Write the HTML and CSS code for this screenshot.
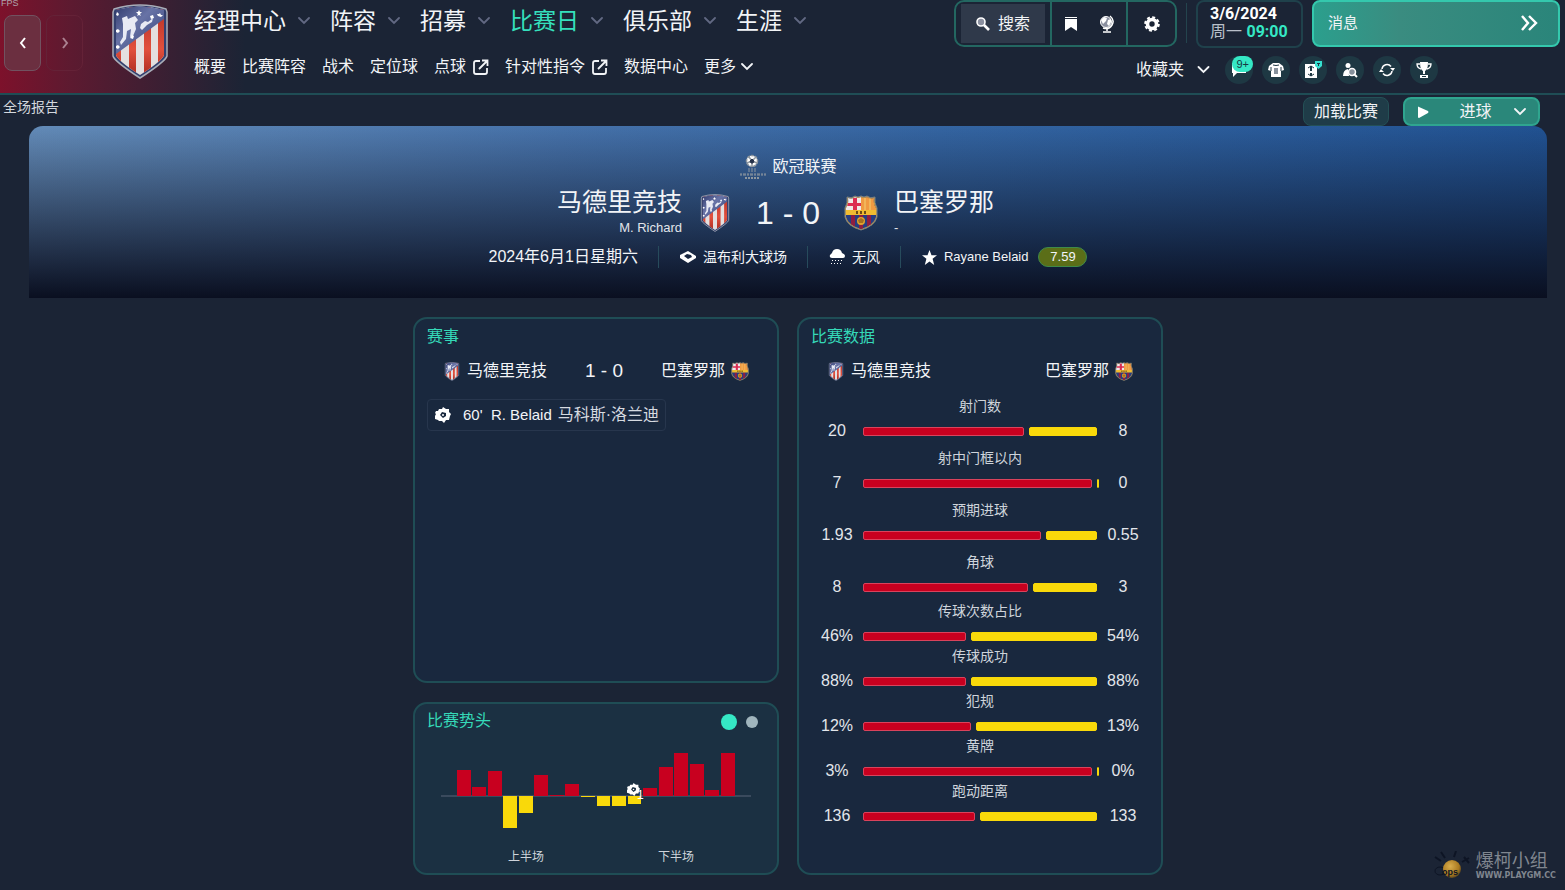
FILE: index.html
```html
<!DOCTYPE html>
<html lang="zh-CN">
<head>
    <meta charset="UTF-8">
    <meta name="viewport" content="width=device-width, initial-scale=1.0">
    <title>全场报告</title>
    <link rel="stylesheet" href="styles.css">
</head>
<body>
    <!-- shared symbols -->
    <svg class="sprite" aria-hidden="true">
        <defs>
            <linearGradient id="navy" x1="0" y1="0" x2="1" y2="1">
                <stop offset="0" stop-color="#2c3668"/>
                <stop offset="0.4" stop-color="#6873a6"/>
                <stop offset="1" stop-color="#28356f"/>
            </linearGradient>
            <linearGradient id="red" x1="0" y1="0" x2="0" y2="1">
                <stop offset="0" stop-color="#b22f24"/>
                <stop offset="0.6" stop-color="#e2503d"/>
                <stop offset="1" stop-color="#a5271d"/>
            </linearGradient>
            <radialGradient id="gold" cx="0.4" cy="0.35" r="0.7">
                <stop offset="0" stop-color="#d9ad4c"/>
                <stop offset="0.7" stop-color="#a97920"/>
                <stop offset="1" stop-color="#4a3a20"/>
            </radialGradient>
            <clipPath id="atmClip"><path d="M4 6Q28 -1 52 6V51Q50 57 28 71Q6 57 4 51Z"/></clipPath>
            <clipPath id="barClip"><path d="M4 3Q8 5 11 2Q14 4 17 2Q20 4 23 2Q26 5 30 3Q29 9 32 13V22Q30 30 17 34Q4 30 2 22V13Q5 9 4 3Z"/></clipPath>
        </defs>
        <symbol id="atletico" viewBox="0 0 56 75">
            <path d="M2 5Q28 -3 54 5L55 8V52Q54 57 28 74Q2 57 1 52V8Z" fill="#33406f" stroke="#a9adb8" stroke-width="1.5"/>
            <g clip-path="url(#atmClip)">
                <rect width="56" height="75" fill="#e4dfdf"/>
                <path d="M2 0h7v75H2zM17 0h7v75h-7zM32 0h7v75h-7zM46 0h7v75h-7z" fill="url(#red)"/>
                <path d="M0 0H56V12L0 53Z" fill="url(#navy)"/>
            </g>
            <path d="M10 14l5-2 1 3 7-3 3 4-3 3 1 6-3 7-3 1 1-8-4 2-1 8-5 6-1-3 3-5V20zM29 20l4-3 3 1 5-4-1 4-5 3-5 5-2-2z" fill="#e8eaf4"/>
            <path d="M27 6l1 2h2l-2 2 1 2-2-1-2 1 1-2-2-2h2zM48 9l1 2h2l-2 2-3-1-1-2h2zM5 8l2 2-1 2-2-1zM38 12l3-1 1 3-3 1zM4 26l2-1 2 2-2 2-2-1zM4 42l2-1 2 2-2 2-2-1zM20 31l2 1-1 3-3-1z" fill="#fff"/>
        </symbol>
        <symbol id="barcelona" viewBox="0 0 34 36">
            <path d="M3 2Q8 4 11 1Q14 3 17 1Q20 3 23 1Q26 4 31 2Q30 8 33 13V22Q31 31 17 35Q3 31 1 22V13Q4 8 3 2Z" fill="#d5a23a" stroke="#777f85"/>
            <g clip-path="url(#barClip)">
                <rect width="34" height="36" fill="#253e82"/>
                <path d="M2 2h15v14H2z" fill="#efe9e8"/>
                <path d="M9 3h4v13H9zM3 8h14v3H3z" fill="#dc2c51"/>
                <path d="M17 2h15v14H17z" fill="#f09a42"/>
                <path d="M20 3h2v13h-2zM25 3h2v13h-2z" fill="#f2b55a"/>
                <path d="M7 20h4v15H7zM15 20h4v15h-4zM23 20h4v15h-4z" fill="#8f1e40"/>
                <path d="M0 15h34v5H0z" fill="#f0bc31"/>
                <path d="M12 16h2v3h-2zM16 16h2v3h-2zM20 16h2v3h-2z" fill="#6b4d18"/>
                <circle cx="17" cy="26" r="4" fill="#e0a42d"/>
                <path d="M14 25l3-2 3 2-1 3h-4z" fill="#a8701e"/>
            </g>
        </symbol>
        <symbol id="ball" viewBox="0 0 16 16">
            <path fill-rule="evenodd" d="M4 2l3 0 1-2 3 2 3 0 0 3 2 2-1 2-1 4-3 0-2 3-2-2-3 0-1-1-3-1 0-3 1-2-1-1 1-2 2 0zM7 5L5 8l3 3 3-2 0-3z"/>
            <circle cx="8" cy="8" r="1"/>
        </symbol>
        <symbol id="chevron" viewBox="0 0 12 8">
            <path d="M1 1l5 5 5-5" fill="none" stroke="currentColor" stroke-width="1.8" stroke-linecap="round"/>
        </symbol>
        <symbol id="popout" viewBox="0 0 16 16">
            <path d="M7 2H3Q1 2 1 4V13Q1 15 3 15H12Q14 15 14 13V9M9 1.500h5.500V7M14 2L6 10" fill="none" stroke="currentColor" stroke-width="1.8"/>
        </symbol>
    </svg>

    <header class="topbar">
        <span class="fps">FPS</span>
        <div class="history">
            <button type="button" aria-label="后退"><svg width="8" height="12" viewBox="0 0 8 12"><path d="M6 1L2 6l4 5" fill="none" stroke="currentColor" stroke-width="2"/></svg></button>
            <button type="button" class="faded" aria-label="前进"><svg width="8" height="12" viewBox="0 0 8 12"><path d="M2 1l4 5-4 5" fill="none" stroke="currentColor" stroke-width="2"/></svg></button>
        </div>
        <svg class="club-crest"><use href="#atletico"/></svg>

        <div class="menus">
            <nav class="main-nav">
                <a href="#">经理中心 <svg><use href="#chevron"/></svg></a>
                <a href="#">阵容 <svg><use href="#chevron"/></svg></a>
                <a href="#">招募 <svg><use href="#chevron"/></svg></a>
                <a href="#" class="active">比赛日 <svg><use href="#chevron"/></svg></a>
                <a href="#">俱乐部 <svg><use href="#chevron"/></svg></a>
                <a href="#">生涯 <svg><use href="#chevron"/></svg></a>
            </nav>
            <nav class="sub-nav">
                <a href="#">概要</a>
                <a href="#">比赛阵容</a>
                <a href="#">战术</a>
                <a href="#">定位球</a>
                <a href="#">点球 <svg width="16" height="16"><use href="#popout"/></svg></a>
                <a href="#">针对性指令 <svg width="16" height="16"><use href="#popout"/></svg></a>
                <a href="#">数据中心</a>
                <a href="#" class="more">更多 <svg width="12" height="8"><use href="#chevron"/></svg></a>
            </nav>
        </div>

        <div class="tools">
            <div class="tools-top">
                <div class="tool-group">
                    <div class="cell"><button type="button" class="search">
                        <svg width="14" height="14" viewBox="0 0 14 14"><circle cx="5" cy="5" r="4" fill="#8b90a0" stroke="#fff" stroke-width="1.6"/><path d="M8 8l5 5" stroke="#fff" stroke-width="2.6"/></svg>
                        搜索</button></div>
                    <div class="cell">
                        <button type="button" aria-label="书签"><svg width="14" height="14" viewBox="0 0 14 14"><path d="M1 0h12v1H1zM1 2h12v12L7 10l-6 4z"/></svg></button>
                        <button type="button" aria-label="世界"><svg width="16" height="18" viewBox="0 0 16 18"><circle cx="7" cy="7" r="5.5" fill="#8b90a0" stroke="#fff"/><path d="M2 5l3-3 3 1-1 3-3 3zM9 5l3-1v3l-2 4-2-2z"/><path d="M11 1q5 4 2 9-3 5-9 3M8 13v3M4 17h8" fill="none" stroke="#fff" stroke-width="1.5"/></svg></button>
                    </div>
                    <div class="cell">
                        <button type="button" aria-label="设置"><svg width="16" height="16" viewBox="0 0 16 16"><circle cx="8" cy="8" r="4.500" fill="none" stroke="#fff" stroke-width="3.600"/><circle cx="8" cy="8" r="6.800" fill="none" stroke="#fff" stroke-width="2" stroke-dasharray="3 2.340"/></svg></button>
                    </div>
                </div>
                <span class="rule"></span>
                <div class="clock">
                    <b>3/6/2024</b>
                    <div>周一 <b class="time">09:00</b></div>
                </div>
                <button type="button" class="messages">消息
                    <svg width="18" height="18" viewBox="0 0 18 18"><path d="M2 2l6 7-6 7M9 2l7 7-7 7" fill="none" stroke="#fff" stroke-width="2.400"/></svg>
                </button>
            </div>
            <div class="favourites">
                <button type="button" class="fav-toggle">收藏夹 <svg width="13" height="8"><use href="#chevron"/></svg></button>
                <button type="button" class="round" aria-label="聊天"><svg width="16" height="14" viewBox="0 0 16 14"><path d="M1 0h14v10H6l-4 4v-4H1z"/></svg><span class="count">9+</span></button>
                <button type="button" class="round" aria-label="球衣"><svg width="16" height="16" viewBox="0 0 16 16"><path d="M5 1h6l4 3 1 4-3 1v6H3V9L0 8l1-4z"/><path d="M5 3q3 1 6 0M3 5v4M13 5v4" stroke="#1e3843" fill="none"/><path d="M6 6h4v6H6z" fill="#87919c"/></svg></button>
                <button type="button" class="round" aria-label="战术板"><svg width="18" height="18" viewBox="0 0 18 18"><path d="M1 3h12v14H1z"/><path d="M7 5v5M7 12v3" stroke="#1e3843" stroke-width="2"/><path d="M4 7l3-2 3 2M4 13l3 2 3-2" fill="none" stroke="#1e3843"/><path d="M11 0h7v5l-3.500 3L11 5z" fill="#35e0d0"/><path d="M13 2h3v1h-1v2h-1V3h-1z" fill="#1e3843"/></svg></button>
                <button type="button" class="round" aria-label="球探"><svg width="16" height="16" viewBox="0 0 16 16"><circle cx="6" cy="3.500" r="2.500"/><path d="M1 14q0-6 5-7l1 7z"/><circle cx="10" cy="10" r="3.500" fill="#87919c" stroke="#fff" stroke-width="1.500"/><path d="M12 12l3 3" stroke="#fff" stroke-width="2"/></svg></button>
                <button type="button" class="round" aria-label="刷新"><svg width="16" height="16" viewBox="0 0 16 16"><path d="M3 7a5 5 0 0 1 9-2.500M13 9a5 5 0 0 1-9 2.500" fill="none" stroke="#fff" stroke-width="1.500"/><path d="M11 6h5l-2 3zM0 10h5L2 7z"/></svg></button>
                <button type="button" class="round" aria-label="奖杯"><svg width="16" height="16" viewBox="0 0 16 16"><path d="M4 0h8q0 8-3 9v3h-2V9Q4 8 4 0zM4 13h8v3H4z"/><path d="M4 2H1q0 4 4 5M12 2h3q0 4-4 5" fill="none" stroke="#fff" stroke-width="1.300"/><path d="M6 14h4v1H6z" fill="#1e3843"/></svg></button>
            </div>
        </div>
    </header>

    <div class="report-bar">
        <h1>全场报告</h1>
        <button type="button" class="load">加载比赛</button>
        <button type="button" class="goals">
            <svg width="12" height="12" viewBox="0 0 12 12"><path d="M1 1q0-1 1 0l9 4q1 1 0 2l-9 5q-1 0-1-1z"/></svg>
            <span>进球</span>
            <svg width="12" height="8"><use href="#chevron"/></svg>
        </button>
    </div>

    <section class="hero">
        <div class="league">
            <svg width="27" height="27" viewBox="0 0 27 27" fill="none" stroke="#8e979f">
                <circle cx="13" cy="7" r="5.500" stroke-width="1.500" stroke-dasharray="3 1"/>
                <path d="M13 7L10 3M13 7l4-4M13 7l5 2M13 7v6M13 7L8 9" stroke-width="1.500"/>
                <path d="M13 5l2 2-1 2h-2l-1-2z" fill="#26324a" stroke="#26324a"/>
                <path d="M9 15h9M9 17h9" stroke-dasharray="2 1"/>
                <path d="M1 20h26M1 21h26" stroke-dasharray="2 1 3 1"/>
                <path d="M6 24h15" stroke-width="2" stroke-dasharray="2 1"/>
            </svg>
            欧冠联赛
        </div>
        <div class="fixture">
            <div class="side home">
                <h2>马德里竞技</h2>
                <p>M. Richard</p>
            </div>
            <div class="score">
                <svg width="34" height="38"><use href="#atletico"/></svg>
                <strong>1 - 0</strong>
                <svg width="34" height="36"><use href="#barcelona"/></svg>
            </div>
            <div class="side">
                <h2>巴塞罗那</h2>
                <p>-</p>
            </div>
        </div>
        <ul class="meta">
            <li class="date">2024年6月1日星期六</li>
            <li><svg width="16" height="12" viewBox="0 0 16 12"><path fill-rule="evenodd" d="M8 0l8 5v2l-8 5-8-5V4zM7 3L4 5l4 3 4-2-1-2z"/></svg>温布利大球场</li>
            <li><svg width="16" height="16" viewBox="0 0 16 16"><path d="M3 9Q0 9 1 6l2-2q1-4 5-4t5 4q3 1 3 3t-2 2z"/><path d="M3 11.500h12M2 14.500h12" stroke="#fff" stroke-dasharray="1 2"/></svg>无风</li>
            <li><svg width="15" height="15" viewBox="0 0 15 15"><path d="M7.500 0l2 5.200H15l-4.400 3.500L12.200 15l-4.700-3.500L2.800 15l1.600-6.300L0 5.200h5.500z"/></svg>Rayane Belaid <span class="rating">7.59</span></li>
        </ul>
    </section>

    <main class="cards">
        <div class="column">
            <section class="card events">
                <h3>赛事</h3>
                <div class="teams">
                    <span><svg><use href="#atletico"/></svg>马德里竞技</span>
                    <strong>1 - 0</strong>
                    <span>巴塞罗那<svg><use href="#barcelona"/></svg></span>
                </div>
                <div class="event">
                    <svg width="16" height="16"><use href="#ball"/></svg>
                    <span class="scorer">60'&nbsp; R. Belaid</span>
                    <span>马科斯·洛兰迪</span>
                </div>
            </section>

            <section class="card momentum">
                <div class="card-head">
                    <h3>比赛势头</h3>
                    <button type="button" class="dot on" aria-label="第1页"></button>
                    <button type="button" class="dot" aria-label="第2页"></button>
                </div>
                <svg class="chart" viewBox="0 0 310 90">
                    <path d="M0 51H310" stroke="#3a4a5d" stroke-width="2"/>
                    <g fill="#c8001f">
                        <rect x="16" y="25" width="14" height="26"/>
                        <rect x="31" y="42" width="14" height="9"/>
                        <rect x="47" y="26" width="14" height="25"/>
                        <rect x="93" y="30" width="14" height="21"/>
                        <rect x="109" y="50" width="14" height="1"/>
                        <rect x="124" y="39" width="14" height="12"/>
                        <rect x="202" y="43" width="14" height="8"/>
                        <rect x="218" y="22" width="14" height="29"/>
                        <rect x="233" y="8" width="14" height="43"/>
                        <rect x="249" y="19" width="14" height="32"/>
                        <rect x="264" y="45" width="14" height="6"/>
                        <rect x="280" y="8" width="14" height="43"/>
                    </g>
                    <g fill="#f9d90a">
                        <rect x="62" y="51" width="14" height="32"/>
                        <rect x="78" y="51" width="14" height="17"/>
                        <rect x="140" y="51" width="14" height="1"/>
                        <rect x="156" y="51" width="13" height="10"/>
                        <rect x="171" y="51" width="14" height="10"/>
                        <rect x="187" y="51" width="13" height="8"/>
                    </g>
                    <use href="#ball" x="186" y="38" width="13" height="13"/>
                    <text x="196" y="54">1</text>
                </svg>
                <div class="halves"><span>上半场</span><span>下半场</span></div>
            </section>
        </div>

        <section class="card stats">
            <h3>比赛数据</h3>
            <div class="teams">
                <span><svg><use href="#atletico"/></svg>马德里竞技</span>
                <span>巴塞罗那<svg><use href="#barcelona"/></svg></span>
            </div>
            <div class="stat-list wide">
                <div class="stat">
                    <h4>射门数</h4>
                    <span>20</span>
                    <div class="bar"><i style="width: 69%"></i><i style="width: 29%"></i></div>
                    <span>8</span>
                </div>
                <div class="stat">
                    <h4>射中门框以内</h4>
                    <span>7</span>
                    <div class="bar"><i style="width: 98%"></i><i style="width: 0%"></i></div>
                    <span>0</span>
                </div>
                <div class="stat">
                    <h4>预期进球</h4>
                    <span>1.93</span>
                    <div class="bar"><i style="width: 76%"></i><i style="width: 22%"></i></div>
                    <span>0.55</span>
                </div>
                <div class="stat">
                    <h4>角球</h4>
                    <span>8</span>
                    <div class="bar"><i style="width: 70.500%"></i><i style="width: 27.500%"></i></div>
                    <span>3</span>
                </div>
            </div>
            <div class="stat-list">
                <div class="stat">
                    <h4>传球次数占比</h4>
                    <span>46%</span>
                    <div class="bar"><i style="width: 44%"></i><i style="width: 54%"></i></div>
                    <span>54%</span>
                </div>
                <div class="stat">
                    <h4>传球成功</h4>
                    <span>88%</span>
                    <div class="bar"><i style="width: 44%"></i><i style="width: 54%"></i></div>
                    <span>88%</span>
                </div>
                <div class="stat">
                    <h4>犯规</h4>
                    <span>12%</span>
                    <div class="bar"><i style="width: 46%"></i><i style="width: 52%"></i></div>
                    <span>13%</span>
                </div>
                <div class="stat">
                    <h4>黄牌</h4>
                    <span>3%</span>
                    <div class="bar"><i style="width: 98%"></i><i style="width: 0%"></i></div>
                    <span>0%</span>
                </div>
                <div class="stat">
                    <h4>跑动距离</h4>
                    <span>136</span>
                    <div class="bar"><i style="width: 48%"></i><i style="width: 50%"></i></div>
                    <span>133</span>
                </div>
            </div>
        </section>
    </main>

    <div class="watermark">
        <svg width="36" height="32" viewBox="0 0 36 32">
            <path d="M7 1l4 6M22 0l-2 6M1 6l6 4M28 11l7-4M30 6l5 6" stroke="#0d1424" stroke-width="2" fill="none"/>
            <ellipse cx="6" cy="20" rx="5" ry="4" fill="none" stroke="#0d1424"/>
            <circle cx="18" cy="18" r="9" fill="url(#gold)"/>
            <text x="16" y="24" text-anchor="middle">ops</text>
        </svg>
        <div>
            <p class="wm-name">爆柯小组</p>
            <p class="wm-site">WWW.PLAYGM.CC</p>
        </div>
    </div>
</body>
</html>
```

FILE: styles.css
```css
* {
    box-sizing: border-box;
    margin: 0;
    padding: 0;
}

body {
    display: flex;
    flex-direction: column;
    position: relative;
    min-height: 100vh;
    background: #1b2435;
    color: #f2f4f7;
    font-family: "Liberation Sans", "Noto Sans CJK SC", sans-serif;
    font-size: 16px;
    line-height: 24px;
}

a {
    color: inherit;
    text-decoration: none;
}

button {
    display: flex;
    align-items: center;
    justify-content: center;
    border: none;
    background: none;
    color: inherit;
    font: inherit;
    cursor: pointer;
}

svg {
    flex: none;
    fill: #fff;
}

h1, h2, h3, h4 {
    font-weight: normal;
}

.sprite {
    position: absolute;
    width: 0;
    height: 0;
}

/* top bar */
.topbar {
    display: flex;
    position: relative;
    height: 95px;
    padding-right: 5px;
    border-bottom: 2px solid #1f4d55;
    background: linear-gradient(90deg, #7d112b 0, #5d1a30 70px, #1b2435 245px);
}

.fps {
    position: absolute;
    top: -3px;
    left: 1px;
    color: #b0a3ab;
    font-size: 9px;
    line-height: 12px;
}

.history {
    display: flex;
    gap: 5px;
    padding: 15px 0 0 4px;
}

.history button {
    width: 37px;
    height: 56px;
    border: 1px solid #715260;
    border-radius: 8px;
    background: #6b2f40;
    color: #fff;
}

.history .faded {
    border-color: #642237;
    background: none;
    color: #ab8190;
}

.club-crest {
    width: 56px;
    height: 75px;
    margin: 4px 26px 0 29px;
}

.main-nav {
    display: flex;
    align-items: center;
    gap: 20px;
    height: 42px;
    font-size: 23px;
    line-height: 32px;
}

.main-nav a {
    display: flex;
    align-items: center;
    gap: 12px;
    white-space: nowrap;
}

.main-nav svg {
    width: 12px;
    height: 8px;
    color: #626983;
}

.main-nav .active {
    color: #35e0bd;
}

.sub-nav {
    display: flex;
    gap: 16px;
    margin-top: 13px;
    white-space: nowrap;
}

.sub-nav a {
    display: flex;
    align-items: center;
    gap: 7px;
}

.sub-nav .more {
    gap: 5px;
}

.tools {
    margin-left: auto;
}

.tools-top {
    display: flex;
    height: 47px;
}

.tool-group {
    display: flex;
    border: 2px solid #236761;
    border-radius: 10px;
}

.cell {
    display: flex;
    align-items: center;
    justify-content: center;
    gap: 21px;
    width: 76px;
    border-right: 2px solid #236761;
}

.cell:first-child {
    width: 96px;
}

.cell:last-child {
    width: 47px;
    border: none;
}

.search {
    gap: 8px;
    width: 84px;
    height: 39px;
    background: #2f394a;
}

.rule {
    width: 1px;
    height: 40px;
    margin: 3px 9px 0;
    background: #24444e;
}

.clock {
    width: 107px;
    height: 48px;
    padding: 3px 12px;
    border: 2px solid #1f414b;
    border-radius: 8px;
    color: #b9c0ca;
    line-height: 18px;
    white-space: nowrap;
}

.clock b {
    color: #fff;
    font-family: Roboto, sans-serif;
}

.clock > b {
    display: block;
}

.clock .time {
    color: #35e8c5;
}

.messages {
    justify-content: space-between;
    width: 248px;
    margin-left: 9px;
    padding: 0 20px 2px 14px;
    border: 2px solid #34c8ad;
    border-radius: 8px;
    background: linear-gradient(90deg, #2b9f8d, #3a8c80 35%, #2a857a);
    font-size: 15px;
}

.favourites {
    display: flex;
    justify-content: flex-end;
    gap: 9px;
    margin: 9px 122px 0 0;
}

.fav-toggle {
    gap: 13px;
    margin-right: 6px;
}

.round {
    position: relative;
    width: 28px;
    height: 28px;
    border-radius: 50%;
    background: #1e3843;
}

.count {
    position: absolute;
    top: 0;
    right: 0;
    padding: 0 4px;
    border-radius: 8px;
    background: #35e8c5;
    color: #173943;
    font-size: 11px;
    line-height: 16px;
}

/* report title and actions */
.report-bar {
    display: flex;
    align-items: flex-start;
    height: 31px;
    padding: 2px 25px 0 3px;
}

.report-bar h1 {
    margin-right: auto;
    font-size: 14px;
    line-height: 20px;
    color: #d3d7dd;
}

.load {
    width: 86px;
    height: 29px;
    margin-right: 14px;
    border: 1px solid #245056;
    border-radius: 8px;
    background: #1f3c48;
}

.goals {
    justify-content: space-between;
    width: 137px;
    height: 29px;
    padding: 0 12px;
    border: 2px solid #2fa58f;
    border-radius: 8px;
    background: #2a877a;
}

.goals span {
    margin-left: 8px;
}

/* match header */
.hero {
    margin: 0 18px 0 29px;
    padding: 27px 20px 30px;
    border-radius: 14px 14px 0 0;
    background:
        linear-gradient(180deg, rgba(11, 17, 34, 0), #0a0f20),
        linear-gradient(90deg, #638bb8, #4672aa 35%, #3465a2 60%, #215292);
}

.league {
    display: flex;
    align-items: center;
    justify-content: center;
    gap: 6px;
    height: 28px;
}

.fixture {
    display: grid;
    grid-template-columns: 1fr auto 1fr;
    gap: 16px;
    margin-top: 3px;
}

.side h2 {
    font-size: 25px;
    line-height: 36px;
}

.side p {
    color: #e0e4ea;
    font-size: 13px;
    line-height: 16px;
}

.home {
    text-align: right;
}

.score {
    display: flex;
    align-items: center;
    gap: 24px;
    padding-top: 6px;
}

.score strong {
    width: 64px;
    font-size: 32px;
    font-weight: normal;
    text-align: center;
    white-space: nowrap;
}

.meta {
    display: flex;
    justify-content: center;
    gap: 20px;
    margin-top: 10px;
    list-style: none;
    font-size: 14px;
    line-height: 22px;
}

.meta li {
    display: flex;
    align-items: center;
    gap: 7px;
}

.meta li + li {
    padding-left: 21px;
    border-left: 1px solid #274b5c;
}

.meta .date {
    font-size: 16px;
}

.meta li:last-child {
    font-size: 13px;
}

.rating {
    width: 49px;
    margin-left: 3px;
    border: 1px solid #3f8a48;
    border-radius: 10px;
    background: #5b6e18;
    line-height: 18px;
    text-align: center;
}

/* cards */
.cards {
    display: grid;
    flex: 1;
    grid-template-columns: minmax(0, 366px) minmax(0, 366px);
    justify-content: center;
    gap: 18px;
    margin: 19px 18px 15px 29px;
}

.column {
    display: flex;
    flex-direction: column;
    gap: 19px;
}

.card {
    padding: 6px 12px 8px;
    border: 2px solid #1f4d55;
    border-radius: 14px;
    background: #19283e;
}

.card h3 {
    color: #35d9b8;
    font-size: 16px;
}

.events {
    flex: 1;
}

.teams {
    display: flex;
    align-items: center;
    justify-content: space-between;
    margin-top: 10px;
    padding: 0 16px;
}

.teams span {
    display: flex;
    align-items: center;
    gap: 6px;
}

.teams svg {
    width: 18px;
    height: 19px;
}

.teams strong {
    font-size: 19px;
    font-weight: normal;
}

.event {
    display: inline-flex;
    align-items: center;
    gap: 6px;
    height: 32px;
    margin-top: 16px;
    padding: 0 6px 0 7px;
    border: 1px solid #27364d;
    border-radius: 4px;
    color: #d6dae0;
}

.scorer {
    margin-left: 6px;
    color: #f2f4f7;
    font-size: 15px;
}

.momentum {
    background: #1b3042;
}

.card-head {
    display: flex;
    align-items: center;
    gap: 9px;
    height: 28px;
    padding-right: 7px;
}

.card-head h3 {
    margin-right: auto;
    padding-bottom: 3px;
}

.dot {
    width: 12px;
    height: 12px;
    border-radius: 50%;
    background: #a0b5bd;
}

.dot.on {
    width: 16px;
    height: 16px;
    background: #35e8c5;
}

.momentum {
    padding-top: 4px;
}

.chart {
    display: block;
    width: 100%;
    height: 90px;
    margin-top: 9px;
    padding: 0 14px;
}

.chart text {
    font-size: 12px;
}

.halves {
    display: grid;
    grid-template-columns: 1fr 1fr;
    margin-top: 14px;
    padding: 0 14px 0 24px;
    color: #ced4db;
    font-size: 12px;
    line-height: 16px;
    text-align: center;
}

.stat-list {
    display: grid;
    gap: 2px;
    margin-top: 6px;
}

.stat-list.wide {
    gap: 9px;
    margin-top: 15px;
}

.stat {
    display: grid;
    grid-template-columns: 52px 1fr 52px;
    align-items: center;
    row-gap: 7px;
    color: #e3e6eb;
    font-size: 16px;
    line-height: 20px;
    text-align: center;
}

.stat h4 {
    grid-column: 1 / 4;
    color: #ced4db;
    font-size: 14px;
    line-height: 16px;
}

.bar {
    display: flex;
    gap: 5px;
}

.bar i {
    flex: none;
    min-width: 2px;
    height: 9px;
    border: 1px solid #d9435c;
    border-radius: 2px;
    background: #c8001f;
}

.bar i:last-child {
    border-color: #f9d90a;
    background: #f9d90a;
}

.watermark {
    display: flex;
    gap: 6px;
    position: absolute;
    right: 9px;
    bottom: 7px;
    color: #80868f;
}

.watermark text {
    fill: #0d1424;
    font-size: 9px;
    font-weight: bold;
}

.wm-name {
    font-size: 18px;
    line-height: 20px;
}

.wm-site {
    font-family: "DejaVu Sans", sans-serif;
    font-size: 8px;
    font-weight: bold;
    line-height: 10px;
}
```
